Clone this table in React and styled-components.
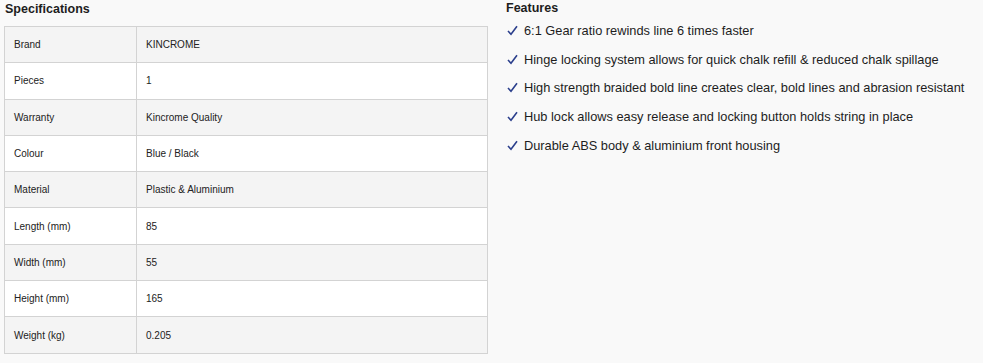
import React from "react";
import styled, { createGlobalStyle } from "styled-components";

const Global = createGlobalStyle`
  html, body { margin: 0; padding: 0; background: #f9f9f9; }
  body { font-family: "Liberation Sans", Arial, sans-serif; color: #222; }
`;

const Page = styled.div`
  display: flex;
  align-items: flex-start;
  padding: 0 0 0 4px;
  gap: 18px;
`;

const Left = styled.section`
  width: 484px;
  flex: none;
`;

const Right = styled.section`
  flex: 1;
`;

const Heading = styled.h3`
  margin: 0;
  padding: ${(p) => (p.$right ? "1px 0 0 0" : "2px 0 0 1px")};
  font-size: 12.5px;
  line-height: 15px;
  font-weight: 700;
  color: #1d1d1d;
  height: ${(p) => (p.$right ? "15px" : "24px")};
`;

const Table = styled.table`
  width: 484px;
  border-collapse: collapse;
  border: 1px solid #d3d3d3;
  font-size: 10px;
  color: #222;
  table-layout: fixed;
`;

const Row = styled.tr`
  background: ${(p) => (p.$odd ? "#f4f4f4" : "#ffffff")};
`;

const Cell = styled.td`
  border: 1px solid #d3d3d3;
  height: 36.3px;
  padding: 0 0 0 9px;
  vertical-align: middle;
  width: ${(p) => (p.$label ? "132px" : "auto")};
  box-sizing: border-box;
`;

const List = styled.ul`
  list-style: none;
  margin: 0;
  padding: 0 0 0 1px;
`;

const Item = styled.li`
  display: flex;
  align-items: center;
  height: 28.75px;
  font-size: 12.8px;
  color: #1d1d1d;
  gap: 6px;
`;

const Check = styled.svg`
  width: 11px;
  height: 11px;
  flex: none;
`;

const specs = [
  ["Brand", "KINCROME"],
  ["Pieces", "1"],
  ["Warranty", "Kincrome Quality"],
  ["Colour", "Blue / Black"],
  ["Material", "Plastic & Aluminium"],
  ["Length (mm)", "85"],
  ["Width (mm)", "55"],
  ["Height (mm)", "165"],
  ["Weight (kg)", "0.205"],
];

const features = [
  "6:1 Gear ratio rewinds line 6 times faster",
  "Hinge locking system allows for quick chalk refill & reduced chalk spillage",
  "High strength braided bold line creates clear, bold lines and abrasion resistant",
  "Hub lock allows easy release and locking button holds string in place",
  "Durable ABS body & aluminium front housing",
];

export default function App() {
  return (
    <>
      <Global />
      <Page>
        <Left>
          <Heading>Specifications</Heading>
          <Table>
            <tbody>
              {specs.map(([k, v], i) => (
                <Row key={k} $odd={i % 2 === 0}>
                  <Cell $label>{k}</Cell>
                  <Cell>{v}</Cell>
                </Row>
              ))}
            </tbody>
          </Table>
        </Left>
        <Right>
          <Heading $right>Features</Heading>
          <List>
            {features.map((f) => (
              <Item key={f}>
                <Check viewBox="0 0 11 11">
                  <path d="M1 6 L4 9.2 L10 1.2" fill="none" stroke="#2b3f8c" strokeWidth="1.6" />
                </Check>
                <span>{f}</span>
              </Item>
            ))}
          </List>
        </Right>
      </Page>
    </>
  );
}
